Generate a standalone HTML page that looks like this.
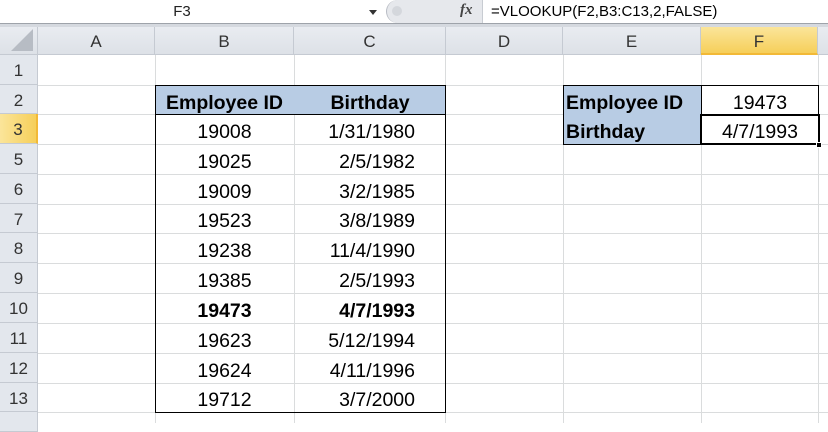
<!DOCTYPE html>
<html><head><style>
*{margin:0;padding:0;box-sizing:border-box}
body{width:828px;height:423px;overflow:hidden;background:#fff;position:relative;font-family:"Liberation Sans",Calibri,sans-serif}
.a{position:absolute}
.ch{position:absolute;top:27px;height:28px;background:linear-gradient(#e9ecf1,#dde1e7);border-right:1px solid #c5cad2;border-bottom:1px solid #c5cad2;color:#333;font-size:17px;text-align:center;line-height:29px}
.rh{position:absolute;left:0;width:38px;background:#e3e7ed;border-bottom:1px solid #c5cad2;border-right:1px solid #c5cad2;color:#333;font-size:17px;text-align:center}
.hl{position:absolute;left:38px;right:0;height:1px;background:#dadcdd}
.vl{position:absolute;top:55px;bottom:0;width:1px;background:#dadcdd}
.t{position:absolute;font-size:19.5px;color:#000;text-align:center;margin-top:3px}
.b{font-weight:bold}
</style></head><body>
<div class="a" style="left:0;top:0;width:828px;height:23px;background:#fff"></div>
<div class="a" style="left:160px;top:3px;width:44px;font-size:15px;text-align:center;color:#222">F3</div>
<div class="a" style="left:369px;top:10px;width:0;height:0;border-left:4px solid transparent;border-right:4px solid transparent;border-top:5px solid #333"></div>
<div class="a" style="left:386px;top:0;width:97px;height:23px;background:#e6e8ec;border-radius:12px 0 0 12px;border-left:1px solid #b8bcc4"></div>
<div class="a" style="left:392px;top:6px;width:10px;height:10px;border-radius:50%;background:#d4d7dc"></div>
<div class="a" style="left:460px;top:2px;font-family:'Liberation Serif',serif;font-style:italic;font-weight:bold;font-size:15px;color:#444">fx</div>
<div class="a" style="left:482px;top:0;width:1px;height:23px;background:#c8ccd2"></div>
<div class="a" style="left:491px;top:3px;font-size:15px;color:#000">=VLOOKUP(F2,B3:C13,2,FALSE)</div>
<div class="a" style="left:0;top:23px;width:828px;height:4px;background:#d5d9df;border-top:1px solid #9ea3aa"></div>
<div class="ch" style="left:0;width:38px"><div class="a" style="right:4px;bottom:3px;width:0;height:0;border-left:22px solid transparent;border-bottom:22px solid #b7bcc4"></div></div>
<div class="ch" style="left:38px;width:117px">A</div>
<div class="ch" style="left:155px;width:139px">B</div>
<div class="ch" style="left:294px;width:152px">C</div>
<div class="ch" style="left:446px;width:117px">D</div>
<div class="ch" style="left:563px;width:138px">E</div>
<div class="ch" style="left:701px;width:117px;background:linear-gradient(#fbe59a,#f6cf5a);border-bottom:2px solid #f2b937">F</div>
<div class="ch" style="left:818px;width:20px"></div>
<div class="vl" style="left:155px"></div><div class="vl" style="left:294px"></div><div class="vl" style="left:445px"></div>
<div class="vl" style="left:563px"></div><div class="vl" style="left:701px"></div><div class="vl" style="left:818px"></div>
<div class="hl" style="top:85px"></div><div class="hl" style="top:114px"></div><div class="hl" style="top:144px"></div>
<div class="hl" style="top:174px"></div><div class="hl" style="top:204px"></div><div class="hl" style="top:233px"></div>
<div class="hl" style="top:263px"></div><div class="hl" style="top:293px"></div><div class="hl" style="top:323px"></div>
<div class="hl" style="top:353px"></div><div class="hl" style="top:383px"></div><div class="hl" style="top:412px"></div>
<div class="rh" style="top:55px;height:30px;line-height:32px">1</div>
<div class="rh" style="top:85px;height:29px;line-height:32px">2</div>
<div class="rh" style="top:114px;height:30px;line-height:32px;background:linear-gradient(90deg,#fbe59a,#f6cf5a);border-right:2px solid #f2b937">3</div>
<div class="rh" style="top:144px;height:30px;line-height:32px">5</div>
<div class="rh" style="top:174px;height:30px;line-height:32px">6</div>
<div class="rh" style="top:204px;height:29px;line-height:32px">7</div>
<div class="rh" style="top:233px;height:30px;line-height:32px">8</div>
<div class="rh" style="top:263px;height:30px;line-height:32px">9</div>
<div class="rh" style="top:293px;height:30px;line-height:32px">10</div>
<div class="rh" style="top:323px;height:30px;line-height:32px">11</div>
<div class="rh" style="top:353px;height:30px;line-height:32px">12</div>
<div class="rh" style="top:383px;height:29px;line-height:32px">13</div>
<div class="rh" style="top:412px;height:20px"></div>
<div class="a" style="left:155px;top:85px;width:291px;height:29px;background:#b8cce4"></div>
<div class="a" style="left:155px;top:85px;width:291px;height:328px;border:1px solid #000"></div>
<div class="a" style="left:155px;top:114px;width:291px;height:1px;background:#000"></div>
<div class="t b" style="left:155px;top:89px;width:139px">Employee ID</div>
<div class="t b" style="left:294px;top:89px;width:152px">Birthday</div>
<div class="t" style="left:155px;top:118px;width:139px">19008</div><div class="t" style="left:294px;top:118px;width:121px;text-align:right">1/31/1980</div>
<div class="t" style="left:155px;top:148px;width:139px">19025</div><div class="t" style="left:294px;top:148px;width:121px;text-align:right">2/5/1982</div>
<div class="t" style="left:155px;top:178px;width:139px">19009</div><div class="t" style="left:294px;top:178px;width:121px;text-align:right">3/2/1985</div>
<div class="t" style="left:155px;top:207px;width:139px">19523</div><div class="t" style="left:294px;top:207px;width:121px;text-align:right">3/8/1989</div>
<div class="t" style="left:155px;top:237px;width:139px">19238</div><div class="t" style="left:294px;top:237px;width:121px;text-align:right">11/4/1990</div>
<div class="t" style="left:155px;top:267px;width:139px">19385</div><div class="t" style="left:294px;top:267px;width:121px;text-align:right">2/5/1993</div>
<div class="t b" style="left:155px;top:297px;width:139px">19473</div><div class="t b" style="left:294px;top:297px;width:121px;text-align:right">4/7/1993</div>
<div class="t" style="left:155px;top:327px;width:139px">19623</div><div class="t" style="left:294px;top:327px;width:121px;text-align:right">5/12/1994</div>
<div class="t" style="left:155px;top:357px;width:139px">19624</div><div class="t" style="left:294px;top:357px;width:121px;text-align:right">4/11/1996</div>
<div class="t" style="left:155px;top:386px;width:139px">19712</div><div class="t" style="left:294px;top:386px;width:121px;text-align:right">3/7/2000</div>
<div class="a" style="left:563px;top:85px;width:139px;height:60px;background:#b8cce4;border:1px solid #000"></div>
<div class="a" style="left:701px;top:85px;width:118px;height:60px;background:#fff;border:1px solid #000"></div>
<div class="a" style="left:701px;top:114px;width:118px;height:1px;background:#000"></div>
<div class="t b" style="left:566px;top:89px;text-align:left">Employee ID</div>
<div class="t b" style="left:566px;top:118px;text-align:left">Birthday</div>
<div class="t" style="left:701px;top:89px;width:118px">19473</div>
<div class="a" style="left:700px;top:114px;width:120px;height:31px;border:2px solid #000"></div>
<div class="t" style="left:701px;top:118px;width:118px">4/7/1993</div>
<div class="a" style="left:816px;top:142px;width:6px;height:6px;background:#000;border:1px solid #fff"></div>
</body></html>
